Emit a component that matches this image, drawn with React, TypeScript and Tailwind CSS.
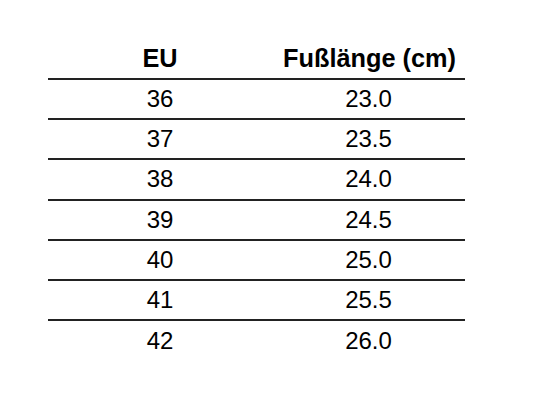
import React from "react";

const rows: [string, string][] = [
  ["36", "23.0"],
  ["37", "23.5"],
  ["38", "24.0"],
  ["39", "24.5"],
  ["40", "25.0"],
  ["41", "25.5"],
  ["42", "26.0"],
];

export default function App() {
  return (
    <div
      className="w-[553px] h-[410px] bg-white text-black pt-[39px] pl-[48px]"
      style={{ fontFamily: '"Liberation Sans", Arial, sans-serif' }}
    >
      <div className="w-[417px] flex flex-col">
        <div className="flex h-[41px] border-b-[2px] border-[#222] font-bold text-[25.3px] items-center">
          <div className="w-[224px] text-center">EU</div>
          <div className="flex-1 text-center pl-[2px]">Fußlänge (cm)</div>
        </div>
        {rows.map(([eu, cm], i) => (
          <div
            key={eu}
            className={
              i < rows.length - 1
                ? "flex h-[40.2px] border-b-[2px] border-[#222] text-[24px] items-center"
                : "flex h-[40.2px] text-[24px] items-center"
            }
          >
            <div className="w-[224px] text-center">{eu}</div>
            <div className="flex-1 text-center">{cm}</div>
          </div>
        ))}
      </div>
    </div>
  );
}
